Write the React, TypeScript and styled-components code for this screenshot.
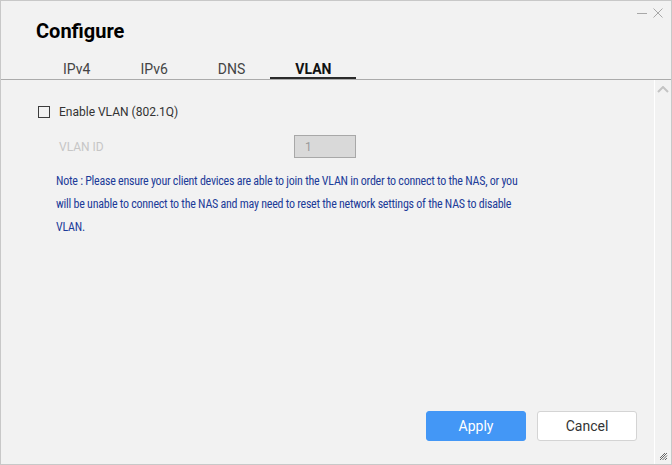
import React, { FC, useState } from 'react';
import styled, { createGlobalStyle } from 'styled-components';

const GlobalStyle = createGlobalStyle`
  html, body {
    margin: 0;
    padding: 0;
    background: #f2f2f2;
  }
  body {
    font-family: Roboto, "Liberation Sans", Arial, sans-serif;
  }
  * {
    box-sizing: border-box;
  }
`;

const Window = styled.div`
  width: 672px;
  height: 465px;
  border: 1px solid #c8c8c8;
  background: #f2f2f2;
  display: flex;
  flex-direction: column;
`;

const Header = styled.div`
  display: flex;
  justify-content: space-between;
  padding: 0 8px 0 35px;
`;

const Title = styled.h1`
  margin: 18px 0 0;
  font-size: 20px;
  line-height: 24px;
  font-weight: 700;
  color: #000;
`;

const Controls = styled.div`
  display: flex;
  align-items: center;
  gap: 6px;
  margin-top: 6px;
  height: 12px;
`;

const ControlButton = styled.button`
  width: 10px;
  height: 10px;
  padding: 0;
  border: none;
  background: none;
  cursor: pointer;
  display: flex;
  svg {
    display: block;
  }
`;

const TabStrip = styled.div`
  display: flex;
  margin-top: 18px;
  padding-left: 37px;
  border-bottom: 1px solid #ababab;
`;

const Tab = styled.button<{ $active?: boolean }>`
  padding: 0 25px;
  border: none;
  border-bottom: 2px solid ${(p) => (p.$active ? '#2b2b2b' : 'transparent')};
  background: none;
  font-family: inherit;
  font-size: 14px;
  line-height: 16px;
  font-weight: ${(p) => (p.$active ? 700 : 400)};
  color: ${(p) => (p.$active ? '#111' : '#444')};
  cursor: pointer;
`;

const Body = styled.div`
  flex: 1;
  display: flex;
  min-height: 0;
`;

const Main = styled.div`
  flex: 1;
  display: flex;
  flex-direction: column;
  padding: 24px 0 0 37px;
`;

const CheckRow = styled.label`
  display: flex;
  align-items: center;
  gap: 9px;
  height: 16px;
  font-size: 12px;
  color: #333;
  cursor: pointer;
`;

const Box = styled.span<{ $checked: boolean }>`
  width: 12px;
  height: 12px;
  border: 1px solid #3c3c3c;
  background: ${(p) => (p.$checked ? '#3c3c3c' : 'transparent')};
`;

const FieldRow = styled.div`
  display: flex;
  align-items: center;
  margin: 15px 0 0 21px;
`;

const FieldLabel = styled.span<{ $disabled?: boolean }>`
  width: 235px;
  font-size: 12px;
  color: ${(p) => (p.$disabled ? '#c6c6c6' : '#333')};
`;

const Input = styled.input`
  width: 62px;
  height: 23px;
  padding: 0 10px;
  border: 1px solid #a8a8a8;
  background: #d9d9d9;
  font-family: inherit;
  font-size: 12px;
  color: #999;
  outline: none;
`;

const Note = styled.p`
  width: 468px;
  margin: 12px 0 0 18px;
  font-family: "Roboto Condensed", Roboto, sans-serif;
  font-stretch: condensed;
  font-size: 12px;
  letter-spacing: -0.25px;
  line-height: 23px;
  color: #1d3c99;
`;

const Actions = styled.div`
  margin-top: auto;
  display: flex;
  justify-content: flex-end;
  gap: 11px;
  padding: 0 17px 23px 0;
`;

const ActionButton = styled.button<{ $primary?: boolean }>`
  width: 100px;
  height: 30px;
  border-radius: 3px;
  border: 1px solid ${(p) => (p.$primary ? '#4397f6' : '#d4d4d4')};
  background: ${(p) => (p.$primary ? '#4397f6' : '#fff')};
  color: ${(p) => (p.$primary ? '#fff' : '#333')};
  font-family: inherit;
  font-size: 14px;
  cursor: pointer;
`;

const ScrollTrack = styled.div`
  width: 17px;
  border-left: 1px solid #fff;
  display: flex;
  flex-direction: column;
  align-items: center;
  justify-content: space-between;
  padding: 6px 0 3px;
`;

const tabs = ['IPv4', 'IPv6', 'DNS', 'VLAN'];

const App: FC = () => {
  const [tab, setTab] = useState('VLAN');
  const [enabled, setEnabled] = useState(false);

  return (
    <>
      <GlobalStyle />
      <Window>
        <Header>
          <Title>Configure</Title>
          <Controls>
            <ControlButton aria-label="minimize">
              <svg width="10" height="10" viewBox="0 0 10 10">
                <path d="M0 5.5h10" stroke="#a8a8a8" strokeWidth="1" />
              </svg>
            </ControlButton>
            <ControlButton aria-label="close">
              <svg width="10" height="10" viewBox="0 0 10 10">
                <path d="M0.5 0.5l9 9M9.5 0.5l-9 9" stroke="#a8a8a8" strokeWidth="1" />
              </svg>
            </ControlButton>
          </Controls>
        </Header>
        <TabStrip>
          {tabs.map((t) => (
            <Tab key={t} $active={t === tab} onClick={() => setTab(t)}>
              {t}
            </Tab>
          ))}
        </TabStrip>
        <Body>
          <Main>
            <CheckRow onClick={() => setEnabled(!enabled)}>
              <Box $checked={enabled} />
              Enable VLAN (802.1Q)
            </CheckRow>
            <FieldRow>
              <FieldLabel $disabled={!enabled}>VLAN ID</FieldLabel>
              <Input defaultValue="1" disabled={!enabled} />
            </FieldRow>
            <Note>
              Note : Please ensure your client devices are able to join the VLAN in order to
              connect to the NAS, or you will be unable to connect to the NAS and may need to
              reset the network settings of the NAS to disable VLAN.
            </Note>
            <Actions>
              <ActionButton $primary>Apply</ActionButton>
              <ActionButton>Cancel</ActionButton>
            </Actions>
          </Main>
          <ScrollTrack>
            <svg width="12" height="7" viewBox="0 0 12 7">
              <path d="M1 6l5-5 5 5" fill="none" stroke="#c4c4c4" strokeWidth="2" />
            </svg>
            <svg width="9" height="9" viewBox="0 0 9 9">
              <path d="M8 1L1 8M8 3.5L3.5 8M8 6L6 8M6 1L1 6" stroke="#666" strokeWidth="1" />
            </svg>
          </ScrollTrack>
        </Body>
      </Window>
    </>
  );
};

export default App;
